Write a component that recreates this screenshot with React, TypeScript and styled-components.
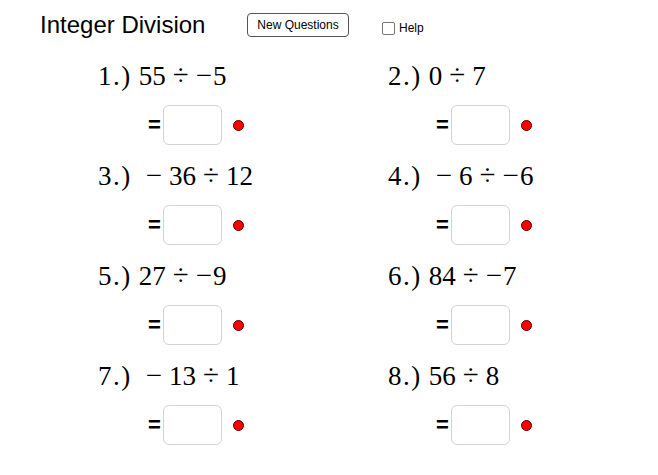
import React from "react";
import styled, { createGlobalStyle } from "styled-components";

const GlobalStyle = createGlobalStyle`
  html, body {
    margin: 0;
    padding: 0;
    background: #ffffff;
  }
  body {
    font-family: "Liberation Sans", Arial, sans-serif;
  }
`;

const Page = styled.div`
  width: 658px;
  height: 475px;
  position: relative;
  overflow: hidden;
  background: #ffffff;
`;

const Header = styled.div`
  display: flex;
  align-items: center;
  height: 50px;
  padding-left: 40px;
`;

const Title = styled.div`
  font-size: 24px;
  color: #000;
  width: 207px;
`;

const Button = styled.button`
  width: 102px;
  height: 24px;
  padding: 0;
  border: 1px solid #555;
  border-radius: 4px;
  background: #fff;
  font-family: "Liberation Sans", Arial, sans-serif;
  font-size: 12px;
  color: #000;
  margin-top: -1px;
`;

const HelpLabel = styled.label`
  display: flex;
  align-items: center;
  gap: 4px;
  margin-left: 33px;
  margin-top: 6px;
  font-size: 12px;
  color: #000;
`;

const Check = styled.span`
  display: inline-block;
  width: 11px;
  height: 11px;
  border: 1px solid #777;
  border-radius: 2px;
  background: #fff;
`;

const Grid = styled.div`
  display: grid;
  grid-template-columns: 290px 290px;
  grid-auto-rows: 100px;
  padding-left: 98px;
`;

const Problem = styled.div`
  display: flex;
  flex-direction: column;
`;

const Expression = styled.div`
  display: flex;
  align-items: baseline;
  font-family: "Liberation Serif", "Times New Roman", serif;
  font-size: 27px;
  color: #000;
  height: 50px;
  line-height: 50px;
  white-space: pre;
`;

const Label = styled.span`
  letter-spacing: 1.5px;
  margin-right: 7px;
`;

const Op = styled.span<{ lead?: boolean }>`
  font-size: 29px;
  margin: 0 7px;
`;

const Neg = styled.span`
  font-size: 29px;
  margin-right: 1px;
`;

const AnswerRow = styled.div<{ indent: number }>`
  display: flex;
  align-items: center;
  height: 50px;
  margin-left: ${(p) => p.indent}px;
`;

const Equals = styled.span`
  font-family: "Liberation Sans", Arial, sans-serif;
  font-size: 22px;
  font-weight: bold;
  width: 15px;
  color: #000;
`;

const AnswerBox = styled.div`
  width: 57px;
  height: 38px;
  border: 1px solid #d3d3d3;
  border-radius: 6px;
  background: #fff;
`;

const Dot = styled.span`
  width: 9px;
  height: 9px;
  border-radius: 50%;
  background: #ff0000;
  border: 1px solid #5a0000;
  margin-left: 11px;
`;

type Item = { n: number; lead?: boolean; a: number; b: number };

const problems: Item[] = [
  { n: 1, a: 55, b: -5 },
  { n: 2, a: 0, b: 7 },
  { n: 3, lead: true, a: 36, b: 12 },
  { n: 4, lead: true, a: 6, b: -6 },
  { n: 5, a: 27, b: -9 },
  { n: 6, a: 84, b: -7 },
  { n: 7, lead: true, a: 13, b: 1 },
  { n: 8, a: 56, b: 8 },
];

const App = () => {
  return (
    <Page>
      <GlobalStyle />
      <Header>
        <Title>Integer Division</Title>
        <Button>New Questions</Button>
        <HelpLabel>
          <Check />
          Help
        </HelpLabel>
      </Header>
      <Grid>
        {problems.map((p) => (
          <Problem key={p.n}>
            <Expression>
              <Label>{p.n}.)</Label>
              {p.lead && <Op lead>−</Op>}
              <span>{p.a}</span>
              <Op>÷</Op>
              {p.b < 0 && <Neg>−</Neg>}
              <span>{Math.abs(p.b)}</span>
            </Expression>
            <AnswerRow indent={p.n % 2 === 1 ? 50 : 48}>
              <Equals>=</Equals>
              <AnswerBox />
              <Dot />
            </AnswerRow>
          </Problem>
        ))}
      </Grid>
    </Page>
  );
};

export default App;
